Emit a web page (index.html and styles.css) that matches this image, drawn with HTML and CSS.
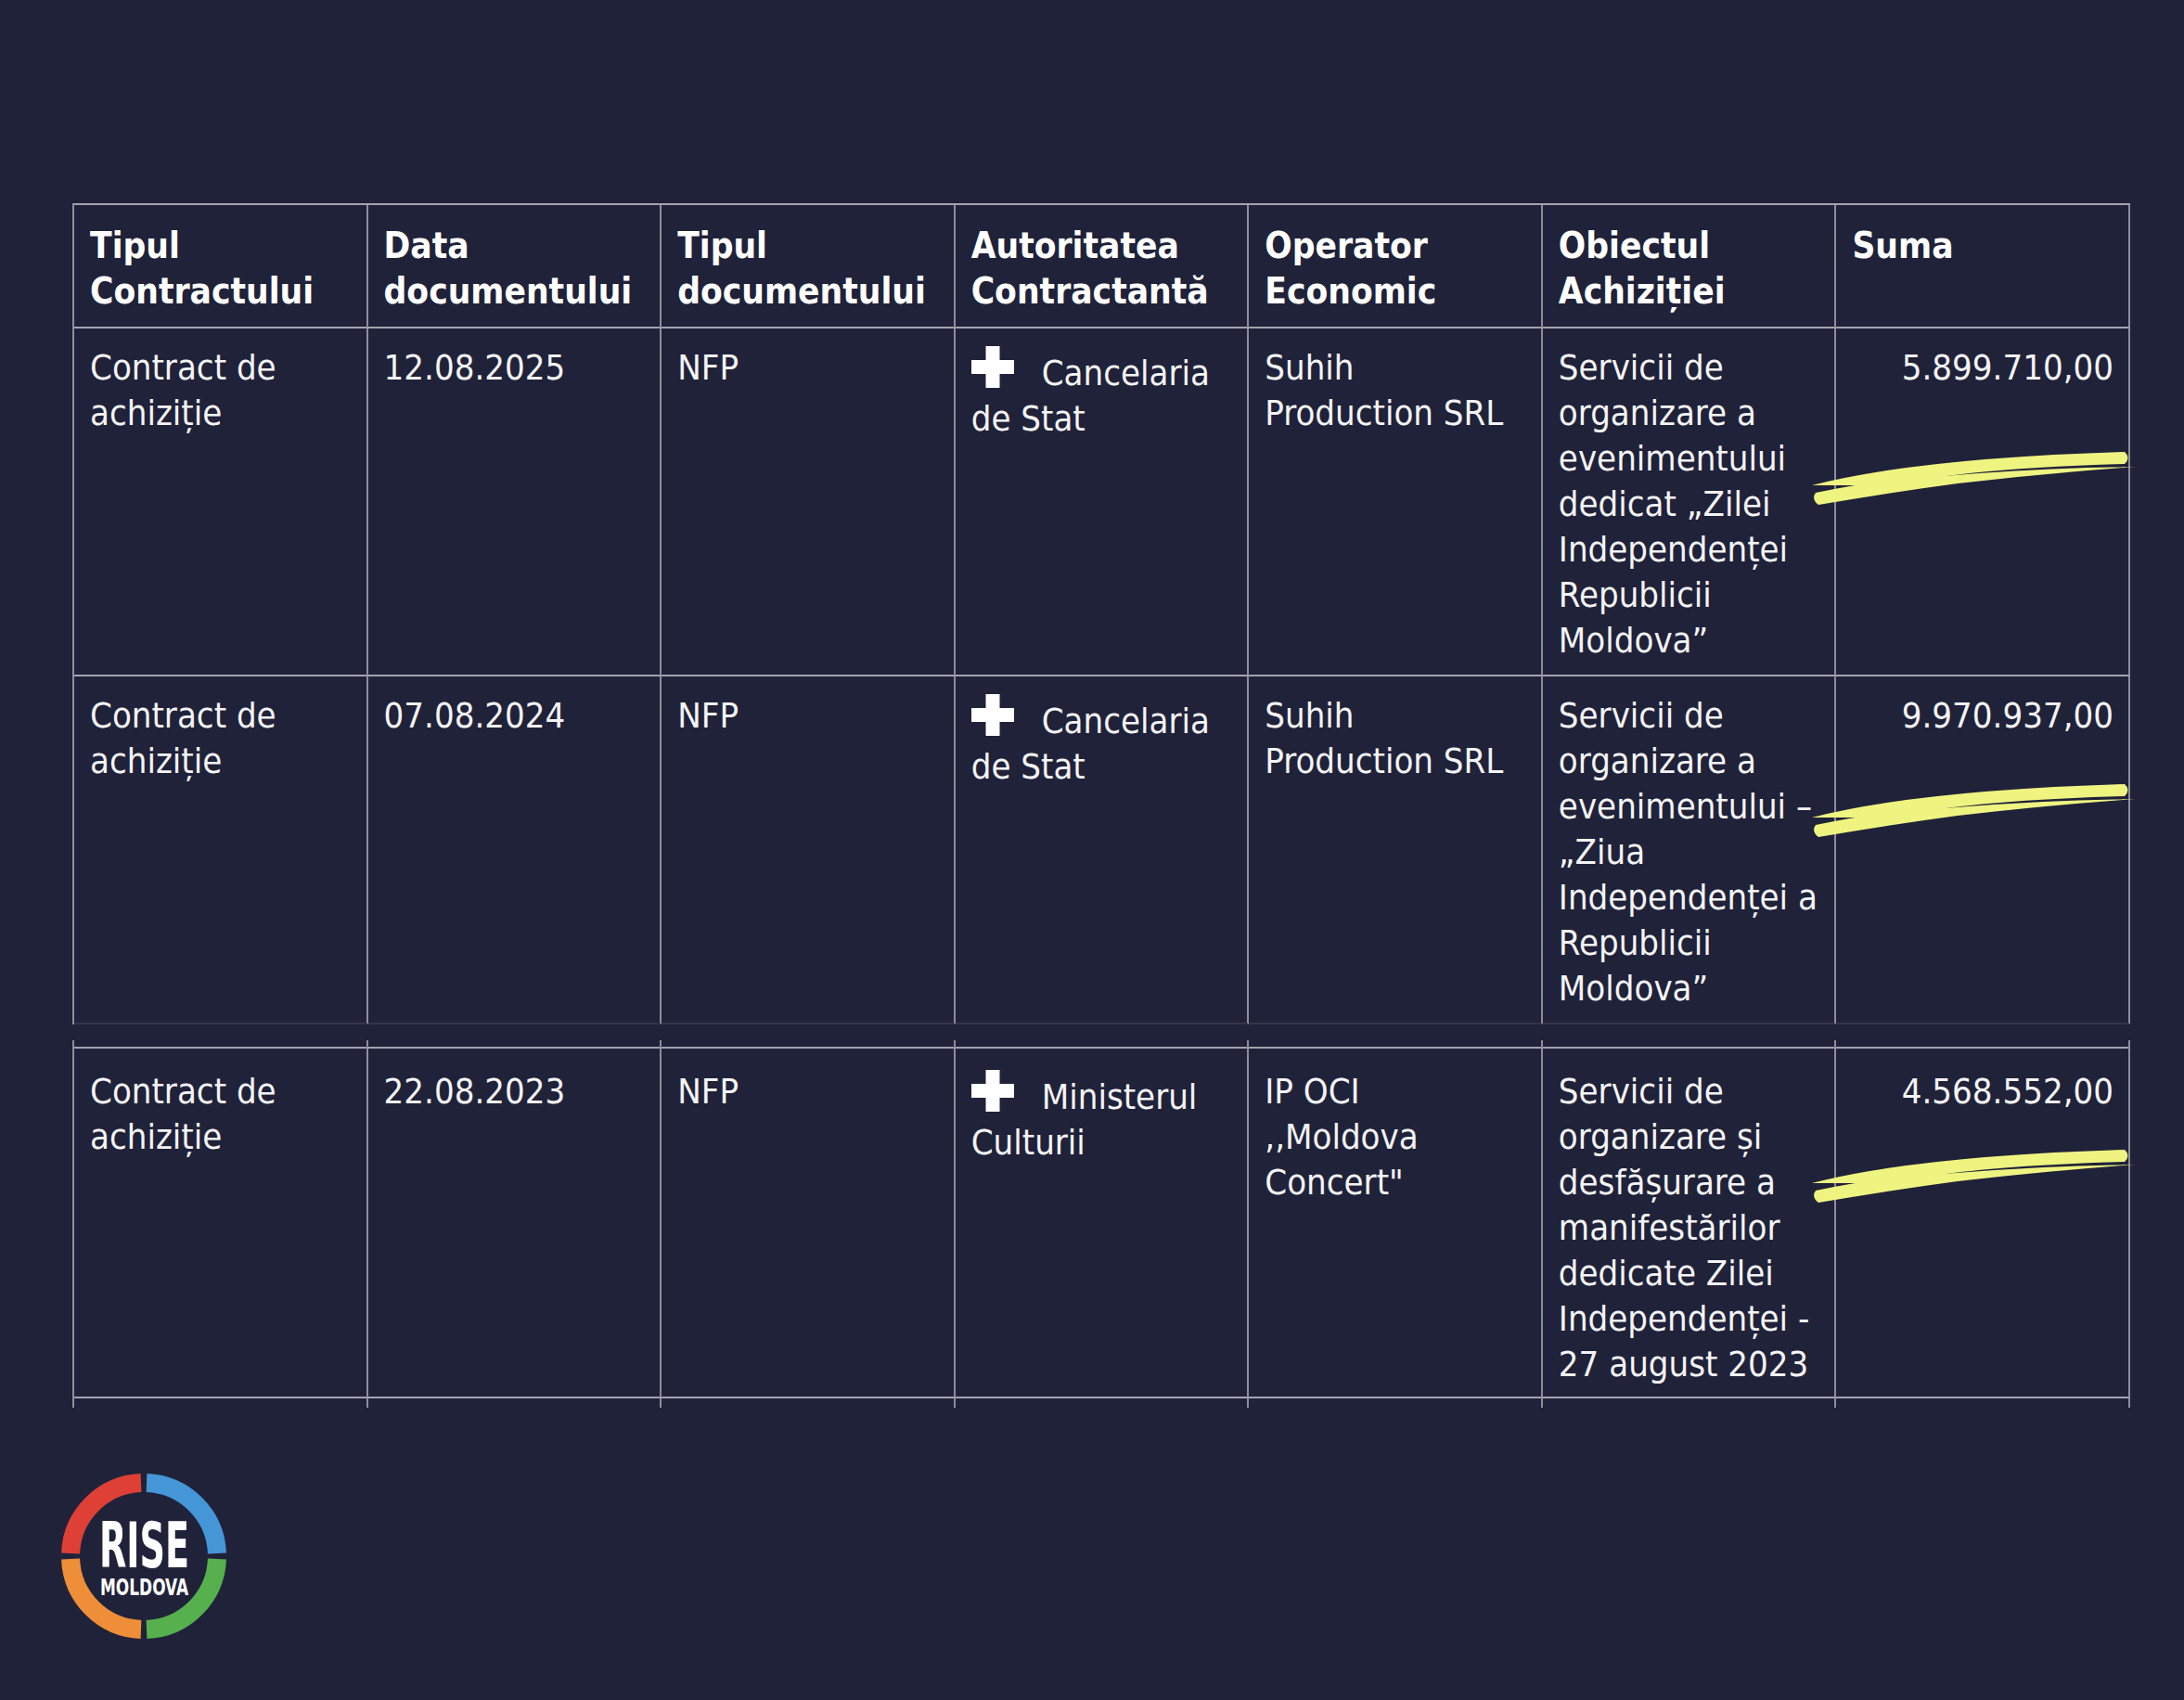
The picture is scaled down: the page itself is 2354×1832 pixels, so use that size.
FILE: index.html
```html
<!DOCTYPE html>
<html lang="ro">
<head>
<meta charset="utf-8">
<title>Contracte</title>
<link rel="stylesheet" href="styles.css">
</head>
<body>
<div class="page">
  <div class="grid grid-main">
    <div class="cell head">Tipul<br>Contractului</div>
    <div class="cell head">Data<br>documentului</div>
    <div class="cell head">Tipul<br>documentului</div>
    <div class="cell head">Autoritatea<br>Contractantă</div>
    <div class="cell head">Operator<br>Economic</div>
    <div class="cell head">Obiectul<br>Achiziției</div>
    <div class="cell head">Suma</div>

    <div class="cell body">Contract de<br>achiziție</div>
    <div class="cell body">12.08.2025</div>
    <div class="cell body">NFP</div>
    <div class="cell body"><svg class="cross" viewBox="0 0 46 45"><path d="M15.5 0h15v15h15.5v15H30.5v15h-15V30H0V15h15.5z" fill="#fff"/></svg>Cancelaria<br>de Stat</div>
    <div class="cell body">Suhih<br>Production SRL</div>
    <div class="cell body">Servicii de<br>organizare a<br>evenimentului<br>dedicat „Zilei<br>Independenței<br>Republicii<br>Moldova”</div>
    <div class="cell body amount">5.899.710,00<svg class="mark mark-1" viewBox="0 0 345 60"><path d="M-2 38Q110 9 335 2Q342 8 335 15Q200 19 130 30L60 38Z"/><path d="M2 46Q80 30 140 28Q245 19 347 18Q250 25 155 36Q80 46 5 59Q-3 53 2 46Z"/></svg></div>

    <div class="cell body row-last">Contract de<br>achiziție</div>
    <div class="cell body row-last">07.08.2024</div>
    <div class="cell body row-last">NFP</div>
    <div class="cell body row-last"><svg class="cross" viewBox="0 0 46 45"><path d="M15.5 0h15v15h15.5v15H30.5v15h-15V30H0V15h15.5z" fill="#fff"/></svg>Cancelaria<br>de Stat</div>
    <div class="cell body row-last">Suhih<br>Production SRL</div>
    <div class="cell body row-last">Servicii de<br>organizare a<br>evenimentului –<br>„Ziua<br>Independenței a<br>Republicii<br>Moldova”</div>
    <div class="cell body amount row-last">9.970.937,00<svg class="mark mark-2" viewBox="0 0 345 60"><path d="M-2 38Q110 9 335 2Q342 8 335 15Q200 19 130 30L60 38Z"/><path d="M2 46Q80 30 140 28Q245 19 347 18Q250 25 155 36Q80 46 5 59Q-3 53 2 46Z"/></svg></div>
  </div>

  <div class="grid grid-second">
    <div class="cell body second">Contract de<br>achiziție</div>
    <div class="cell body second">22.08.2023</div>
    <div class="cell body second">NFP</div>
    <div class="cell body second"><svg class="cross" viewBox="0 0 46 45"><path d="M15.5 0h15v15h15.5v15H30.5v15h-15V30H0V15h15.5z" fill="#fff"/></svg>Ministerul<br>Culturii</div>
    <div class="cell body second">IP OCI<br>,,Moldova<br>Concert"</div>
    <div class="cell body second">Servicii de<br>organizare și<br>desfășurare a<br>manifestărilor<br>dedicate Zilei<br>Independenței -<br>27 august 2023</div>
    <div class="cell body amount second">4.568.552,00<svg class="mark mark-3" viewBox="0 0 345 60"><path d="M-2 38Q110 9 335 2Q342 8 335 15Q200 19 130 30L60 38Z"/><path d="M2 46Q80 30 140 28Q245 19 347 18Q250 25 155 36Q80 46 5 59Q-3 53 2 46Z"/></svg></div>
  </div>

  <div class="logo">
    <svg viewBox="0 0 180 180" width="180" height="180">
      <g fill="none" stroke-width="20">
        <path d="M11.06 87A79 79 0 0 1 87 11.06" stroke="#de4036"/>
        <path d="M93 11.06A79 79 0 0 1 168.94 87" stroke="#4596d6"/>
        <path d="M168.94 93A79 79 0 0 1 93 168.94" stroke="#56b04e"/>
        <path d="M87 168.94A79 79 0 0 1 11.06 93" stroke="#ee8e38"/>
      </g>
      <text x="42" y="102" class="logo-rise" textLength="97" lengthAdjust="spacingAndGlyphs">RISE</text>
      <text x="43" y="132" class="logo-moldova" textLength="95" lengthAdjust="spacingAndGlyphs">MOLDOVA</text>
    </svg>
  </div>
</div>
</body>
</html>
```

FILE: styles.css
```css
html, body {
  margin: 0;
  padding: 0;
  background: #202239;
}

body {
  font-family: "DejaVu Sans Condensed", "DejaVu Sans", sans-serif;
  color: #f4f4f6;
  min-height: 1832px;
}

.page {
  padding: 219px 0 0 78px;
}

.grid {
  display: grid;
  grid-template-columns: repeat(7, 1fr);
  width: 2216px;
  border-left: 2px solid #8c8e9c;
  border-top: 2px solid #a2a4b1;
}

.grid-second {
  margin-top: 24px;
  position: relative;
}

.cell {
  border-right: 2px solid #8c8e9c;
  border-bottom: 2px solid #a2a4b1;
  padding-left: 17px;
  padding-right: 16px;
  white-space: nowrap;
}

.head {
  font-weight: bold;
  font-size: 38.5px;
  line-height: 49px;
  padding-top: 19px;
  padding-bottom: 14px;
  color: #ffffff;
}

.body {
  font-size: 38px;
  line-height: 49px;
  padding-top: 18px;
  padding-bottom: 12px;
}

.row-last {
  border-bottom-color: rgba(162, 164, 177, 0.15);
}

.second {
  padding-top: 22px;
  padding-bottom: 10px;
  position: relative;
}

/* small tick marks where the vertical rules overshoot the frame */
.second::before,
.second::after,
.grid-second::before,
.grid-second::after {
  content: "";
  position: absolute;
  width: 2px;
  background: #8c8e9c;
}

.second::before {
  right: -2px;
  top: -9px;
  height: 9px;
}

.second::after {
  right: -2px;
  bottom: -12px;
  height: 10px;
}

.grid-second::before {
  left: -2px;
  top: -9px;
  height: 9px;
}

.grid-second::after {
  left: -2px;
  bottom: -10px;
  height: 10px;
}

.amount {
  text-align: right;
  position: relative;
}

.cross {
  width: 46px;
  height: 45px;
  margin-top: 1px;
  margin-right: 30px;
  vertical-align: -3px;
}

.mark {
  position: absolute;
  left: -24px;
  width: 345px;
  height: 60px;
  overflow: visible;
  fill: #eff481;
}

.mark-1 { top: 131px; }
.mark-2 { top: 114px; }
.mark-3 { top: 107px; }

.logo {
  margin-top: 80px;
  margin-left: -13px;
  width: 180px;
  height: 180px;
}

.logo svg {
  display: block;
}

.logo-rise {
  font-family: "DejaVu Sans Condensed", sans-serif;
  font-weight: bold;
  font-size: 68px;
  fill: #ffffff;
}

.logo-moldova {
  font-family: "DejaVu Sans Condensed", sans-serif;
  font-weight: bold;
  font-size: 25px;
  fill: #ffffff;
}
```
